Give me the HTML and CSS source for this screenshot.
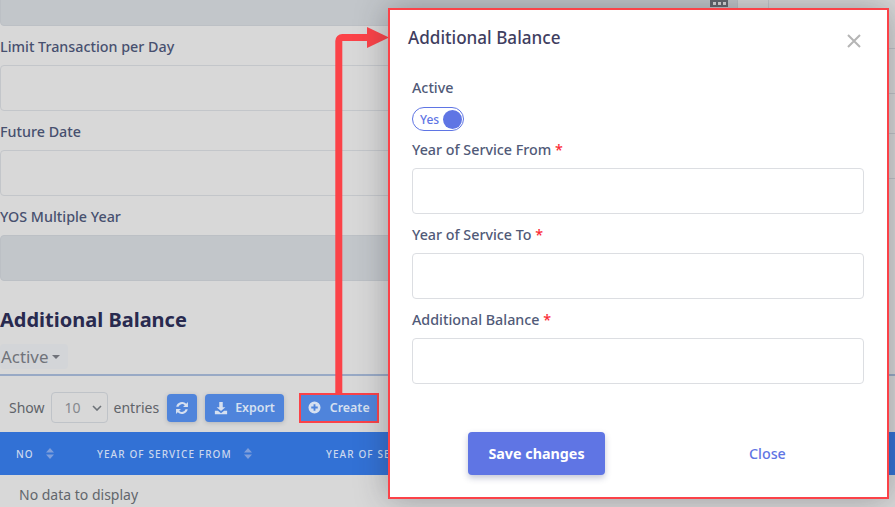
FILE: index.html
```html
<!DOCTYPE html>
<html lang="en">
<head>
<meta charset="utf-8">
<title>Additional Balance</title>
<link rel="stylesheet" href="styles.css">
</head>
<body>
<main class="page">
  <div class="form-area">
    <div class="form-col">
      <div class="control disabled"></div>
      <label class="label">Limit Transaction per Day</label>
      <div class="control"></div>
      <label class="label">Future Date</label>
      <div class="control"></div>
      <label class="label">YOS Multiple Year</label>
      <div class="control disabled"></div>
    </div>
    <div class="side-col">
      <div class="side-row"></div>
      <div class="side-row"></div>
      <div class="side-row short"></div>
      <div class="side-row"></div>
    </div>
  </div>
  <h2 class="section-title">Additional Balance</h2>
  <div class="tabs"><span class="tab">Active<span class="caret"></span></span></div>
  <div class="toolbar">
    <span class="muted">Show</span>
    <span class="select">10
      <svg class="chev" viewBox="0 0 10 6" width="10" height="6"><path d="M1 1l4 4 4-4" fill="none" stroke="#6d7278" stroke-width="1.6"/></svg>
    </span>
    <span class="muted">entries</span>
    <span class="btn icon-btn">
      <svg viewBox="0 0 16 16" width="14" height="14"><path d="M14.800 1.200v5.600H9.200l2-2A4.300 4.300 0 0 0 4 6.500H1.400a6.900 6.900 0 0 1 11.500-3.400zM1.200 14.800V9.200h5.600l-2 2A4.300 4.300 0 0 0 12 9.500h2.600a6.900 6.900 0 0 1-11.500 3.400z" fill="#d6e0f0"/></svg>
    </span>
    <span class="btn">
      <svg viewBox="0 0 16 16" width="14" height="14"><path d="M6 1h4v6h3L8 11.500 3 7h3zM1 11h3.500L8 14l3.500-3H15v4H1z" fill="#d6e0f0"/></svg>
      Export
    </span>
    <span class="btn create">
      <svg viewBox="0 0 14 14" width="13" height="13"><path d="M7 .5a6.500 6.500 0 1 0 0 13 6.500 6.500 0 0 0 0-13zM6 3.500h2V6h2.500v2H8v2.500H6V8H3.500V6H6z" fill="#d6e0f0" fill-rule="evenodd"/></svg>
      Create
    </span>
  </div>
  <div class="table-head">
    <span class="th th-no">NO<svg class="sort" viewBox="0 0 8 11" width="8" height="11"><path d="M4 0l4 4.500H0zM4 11L0 6.500h8z" fill="#7f9fdc"/></svg></span>
    <span class="th th-from">YEAR OF SERVICE FROM<svg class="sort" viewBox="0 0 8 11" width="8" height="11"><path d="M4 0l4 4.500H0zM4 11L0 6.500h8z" fill="#7f9fdc"/></svg></span>
    <span class="th">YEAR OF SERVICE TO</span>
  </div>
  <div class="empty">No data to display</div>
</main>

<span class="dots"><i></i><i></i><i></i></span>

<svg class="arrow" viewBox="0 0 390 396" width="390" height="396">
  <path d="M338.800 395V41a3.500 3.500 0 0 1 3.500-3.500H368" fill="none" stroke="#fb4248" stroke-width="7"/>
  <path d="M367 27l22 10.500L367 48z" fill="#fb4248"/>
</svg>

<section class="modal">
  <header class="modal-head">
    <h3 class="modal-title">Additional Balance</h3>
    <svg class="close-x" viewBox="0 0 14 14" width="14" height="14"><path d="M1 1l12 12M13 1L1 13" stroke="#b5b5b5" stroke-width="2" fill="none"/></svg>
  </header>
  <div class="modal-body">
    <div class="field-label first">Active</div>
    <div class="toggle"><span class="toggle-text">Yes</span><span class="knob"></span></div>
    <div class="field-label tight">Year of Service From <span class="req">*</span></div>
    <div class="input"></div>
    <div class="field-label">Year of Service To <span class="req">*</span></div>
    <div class="input"></div>
    <div class="field-label">Additional Balance <span class="req">*</span></div>
    <div class="input"></div>
  </div>
  <footer class="modal-foot">
    <button class="save">Save changes</button>
    <button class="close-btn">Close</button>
  </footer>
</section>
</body>
</html>
```
FILE: styles.css
```css
* { box-sizing: border-box; }
html, body { margin: 0; height: 100%; overflow: hidden; }
body { background: #d8d8d8; font-family: "Noto Sans", "Open Sans", sans-serif; color: #4a5472; position: relative; }
.page { display: flex; flex-direction: column; margin-top: -20px; }
.form-area { display: flex; }
.form-col { width: 738px; flex: none; }
.side-col { flex: 1; margin-left: 30px; border-left: 1px solid #c3c6ca; padding-top: 24px; }
.side-row { height: 45px; border-bottom: 1px solid #bfc2c6; }
.side-row.short { height: 40px; }
.control { height: 46px; border: 1px solid #c3c6ca; border-radius: 4px; background: #d8d8d8; }
.control.disabled { background: #c2c6ca; border-color: #bcc0c5; }
.label { display: block; font-size: 14.300px; line-height: 20px; font-weight: 500; color: #47506f; margin: 11px 0 9px; height: 19px; }
.section-title { margin: 24px 0 0; font-size: 20px; line-height: 30px; font-weight: 700; color: #282a4f; }
.tabs { margin-top: 9px; height: 32px; border-bottom: 2px solid #98a9c5; }
.tab { display: inline-flex; align-items: center; height: 25px; padding: 0 8px 0 1px; font-size: 16.900px; color: #70737a; background: #d3d5d8; border-radius: 4px; }
.caret { width: 0; height: 0; margin-left: 4px; border: 4px solid transparent; border-top-color: #70737a; border-bottom: 0; }
.toolbar { display: flex; align-items: center; height: 31px; margin-top: 16px; padding-left: 9px; font-size: 14px; color: #5f6369; }
.muted { color: #5f6369; }
.select { display: flex; align-items: center; justify-content: space-between; width: 57px; height: 31px; margin: 0 6px 0 6px; padding: 0 5px 0 13px; border: 1px solid #bfc3c8; border-radius: 4px; color: #85888d; }
.btn { display: flex; align-items: center; gap: 7px; height: 28px; padding: 0 9px; margin-left: 8px; border-radius: 4px; background: #4f84db; color: #d6e0f0; font-size: 12.400px; font-weight: 600; box-shadow: 0 1px 4px rgba(60,70,90,.25); }
.btn.icon-btn { width: 30px; padding: 0; justify-content: center; }
.btn.create { margin-left: 15px; width: 80px; height: 30px; padding: 0 0 0 7px; gap: 9px; border-radius: 0; box-shadow: none; border: 2px solid #fb4248; }
.table-head { display: flex; align-items: center; height: 43px; background: #3271d5; color: #cbd8ee; font-size: 10px; font-weight: 500; letter-spacing: 1.100px; padding-left: 16px; margin-top: 9px; white-space: nowrap; }
.th { display: flex; align-items: center; }
.th-no { width: 81px; }
.th-from { width: 229px; }
.sort { margin-left: 12px; }
.empty { font-size: 14px; line-height: 20px; color: #62666c; padding: 10px 0 0 19px; }
.dots { position: absolute; left: 710px; top: 0; width: 18px; height: 7px; background: #63676e; display: flex; justify-content: center; align-items: center; gap: 2px; }
.dots i { width: 3px; height: 3px; background: #d8d8d8; }
.arrow { position: absolute; left: 0; top: 0; }
.modal { position: absolute; left: 388px; top: 8px; width: 501px; height: 491px; background: #fff; border: 2px solid #fb4248; box-shadow: 0 0 30px rgba(40,40,50,.35); display: flex; flex-direction: column; }
.modal-head { display: flex; justify-content: space-between; padding: 17px 26px 0 18px; height: 68px; }
.modal-title { margin: 0; font-size: 17.100px; line-height: 22px; font-weight: 500; color: #3f3e5f; }
.close-x { margin-top: 7px; }
.modal-body { padding: 0 23px 0 22px; }
.field-label { font-size: 14.300px; line-height: 20px; color: #515a78; font-weight: 500; margin: 11px 0 8px; }
.field-label.first { margin: 0 0 9px; }
.field-label.tight { margin: 9px 0 8px; }
.req { color: #fb2c36; }
.toggle { display: flex; align-items: center; justify-content: space-between; width: 52px; height: 24px; padding: 0 1px 0 7px; border: 1px solid #5f75e4; border-radius: 12px; color: #5f75e4; }
.toggle-text { font-size: 12px; font-weight: 500; }
.knob { width: 19px; height: 19px; border-radius: 50%; background: #5f75e4; }
.input { height: 46px; border: 1px solid #dcdee2; border-radius: 4px; background: #fff; }
.modal-foot { display: flex; align-items: center; padding: 48px 0 0 78px; }
button { font-family: inherit; border: 0; cursor: pointer; }
.save { width: 137px; height: 43px; background: #5f75e4; color: #fff; font-size: 14.300px; font-weight: 700; border-radius: 4px; box-shadow: 0 3px 6px rgba(60,70,120,.3); }
.close-btn { background: none; color: #5f75e4; font-size: 14.300px; font-weight: 500; margin-left: 144px; padding: 0; }
```
